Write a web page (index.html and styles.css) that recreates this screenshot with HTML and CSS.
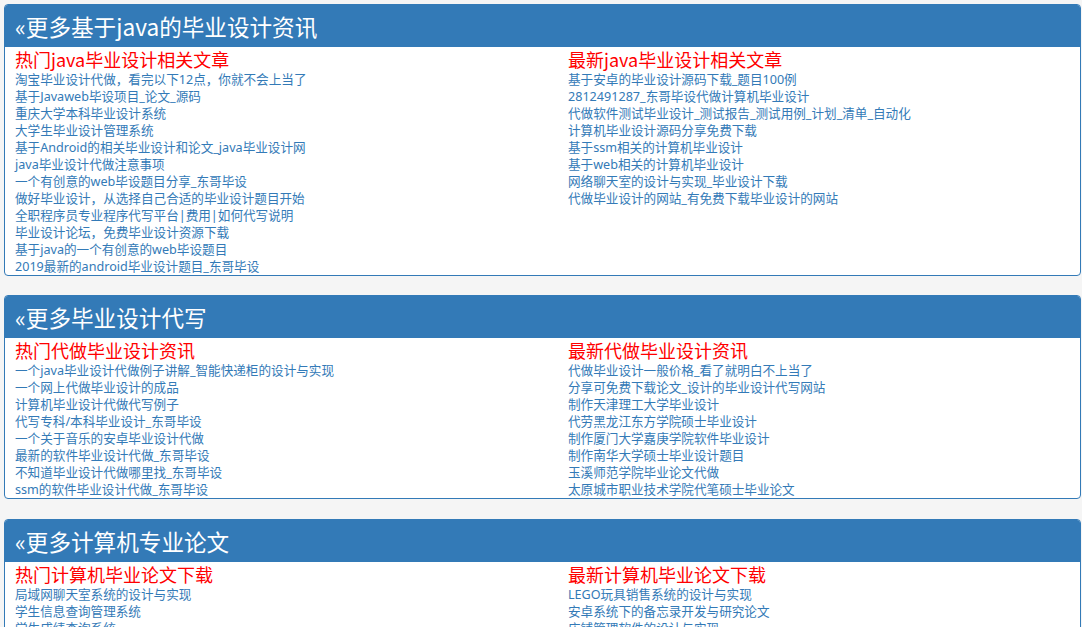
FILE: index.html
```html
<!DOCTYPE html>
<html lang="zh-CN">
<head>
    <meta charset="UTF-8">
    <title>毕业设计资讯</title>
    <link rel="stylesheet" href="styles.css">
</head>
<body>
    <div class="panel">
        <div class="panel-heading">«更多基于java的毕业设计资讯</div>
        <div class="panel-body">
            <div class="col">
                <h4>热门java毕业设计相关文章</h4>
                <ul>
                    <li><a href="#">淘宝毕业设计代做，看完以下12点，你就不会上当了</a></li>
                    <li><a href="#">基于Javaweb毕设项目_论文_源码</a></li>
                    <li><a href="#">重庆大学本科毕业设计系统</a></li>
                    <li><a href="#">大学生毕业设计管理系统</a></li>
                    <li><a href="#">基于Android的相关毕业设计和论文_java毕业设计网</a></li>
                    <li><a href="#">java毕业设计代做注意事项</a></li>
                    <li><a href="#">一个有创意的web毕设题目分享_东哥毕设</a></li>
                    <li><a href="#">做好毕业设计，从选择自己合适的毕业设计题目开始</a></li>
                    <li><a href="#">全职程序员专业程序代写平台|费用|如何代写说明</a></li>
                    <li><a href="#">毕业设计论坛，免费毕业设计资源下载</a></li>
                    <li><a href="#">基于java的一个有创意的web毕设题目</a></li>
                    <li><a href="#">2019最新的android毕业设计题目_东哥毕设</a></li>
                </ul>
            </div>
            <div class="col">
                <h4>最新java毕业设计相关文章</h4>
                <ul>
                    <li><a href="#">基于安卓的毕业设计源码下载_题目100例</a></li>
                    <li><a href="#">2812491287_东哥毕设代做计算机毕业设计</a></li>
                    <li><a href="#">代做软件测试毕业设计_测试报告_测试用例_计划_清单_自动化</a></li>
                    <li><a href="#">计算机毕业设计源码分享免费下载</a></li>
                    <li><a href="#">基于ssm相关的计算机毕业设计</a></li>
                    <li><a href="#">基于web相关的计算机毕业设计</a></li>
                    <li><a href="#">网络聊天室的设计与实现_毕业设计下载</a></li>
                    <li><a href="#">代做毕业设计的网站_有免费下载毕业设计的网站</a></li>
                </ul>
            </div>
        </div>
    </div>

    <div class="panel">
        <div class="panel-heading">«更多毕业设计代写</div>
        <div class="panel-body">
            <div class="col">
                <h4>热门代做毕业设计资讯</h4>
                <ul>
                    <li><a href="#">一个java毕业设计代做例子讲解_智能快递柜的设计与实现</a></li>
                    <li><a href="#">一个网上代做毕业设计的成品</a></li>
                    <li><a href="#">计算机毕业设计代做代写例子</a></li>
                    <li><a href="#">代写专科/本科毕业设计_东哥毕设</a></li>
                    <li><a href="#">一个关于音乐的安卓毕业设计代做</a></li>
                    <li><a href="#">最新的软件毕业设计代做_东哥毕设</a></li>
                    <li><a href="#">不知道毕业设计代做哪里找_东哥毕设</a></li>
                    <li><a href="#">ssm的软件毕业设计代做_东哥毕设</a></li>
                </ul>
            </div>
            <div class="col">
                <h4>最新代做毕业设计资讯</h4>
                <ul>
                    <li><a href="#">代做毕业设计一般价格_看了就明白不上当了</a></li>
                    <li><a href="#">分享可免费下载论文_设计的毕业设计代写网站</a></li>
                    <li><a href="#">制作天津理工大学毕业设计</a></li>
                    <li><a href="#">代劳黑龙江东方学院硕士毕业设计</a></li>
                    <li><a href="#">制作厦门大学嘉庚学院软件毕业设计</a></li>
                    <li><a href="#">制作南华大学硕士毕业设计题目</a></li>
                    <li><a href="#">玉溪师范学院毕业论文代做</a></li>
                    <li><a href="#">太原城市职业技术学院代笔硕士毕业论文</a></li>
                </ul>
            </div>
        </div>
    </div>

    <div class="panel">
        <div class="panel-heading">«更多计算机专业论文</div>
        <div class="panel-body">
            <div class="col">
                <h4>热门计算机毕业论文下载</h4>
                <ul>
                    <li><a href="#">局域网聊天室系统的设计与实现</a></li>
                    <li><a href="#">学生信息查询管理系统</a></li>
                    <li><a href="#">学生成绩查询系统</a></li>
                    <li><a href="#">图书管理系统的设计与实现</a></li>
                </ul>
            </div>
            <div class="col">
                <h4>最新计算机毕业论文下载</h4>
                <ul>
                    <li><a href="#">LEGO玩具销售系统的设计与实现</a></li>
                    <li><a href="#">安卓系统下的备忘录开发与研究论文</a></li>
                    <li><a href="#">店铺管理软件的设计与实现</a></li>
                    <li><a href="#">在线考试系统的设计与实现</a></li>
                </ul>
            </div>
        </div>
    </div>
</body>
</html>
```

FILE: styles.css
```css
body {
    margin: 0;
    padding: 4px 1px 0 4px;
    background-color: #f5f5f5;
    font-family: "Noto Sans", "Noto Sans CJK SC", sans-serif;
    color: #333;
}

.panel {
    background-color: #fff;
    border: 1px solid #337ab7;
    border-radius: 4px;
    margin-bottom: 19px;
    overflow: hidden;
}

.panel + .panel + .panel {
    margin-top: 20px;
}

.panel-heading {
    background-color: #337ab7;
    color: #fff;
    height: 42px;
    line-height: 44px;
    padding-left: 10px;
    font-size: 22.6px;
    font-family: "Noto Sans CJK SC", sans-serif;
}

.panel-body {
    display: grid;
    grid-template-columns: 553px 1fr;
    padding-left: 10px;
}

.col h4 {
    margin: 0;
    font-weight: normal;
    font-size: 18px;
    line-height: 24px;
    color: #ff0000;
    font-family: "Noto Sans CJK SC", sans-serif;
}

.col ul {
    list-style: none;
    margin: 0;
    padding: 0;
}

.col li {
    font-size: 12.6px;
    line-height: 17px;
    white-space: nowrap;
}

.col a {
    color: #337ab7;
    text-decoration: none;
}
```
